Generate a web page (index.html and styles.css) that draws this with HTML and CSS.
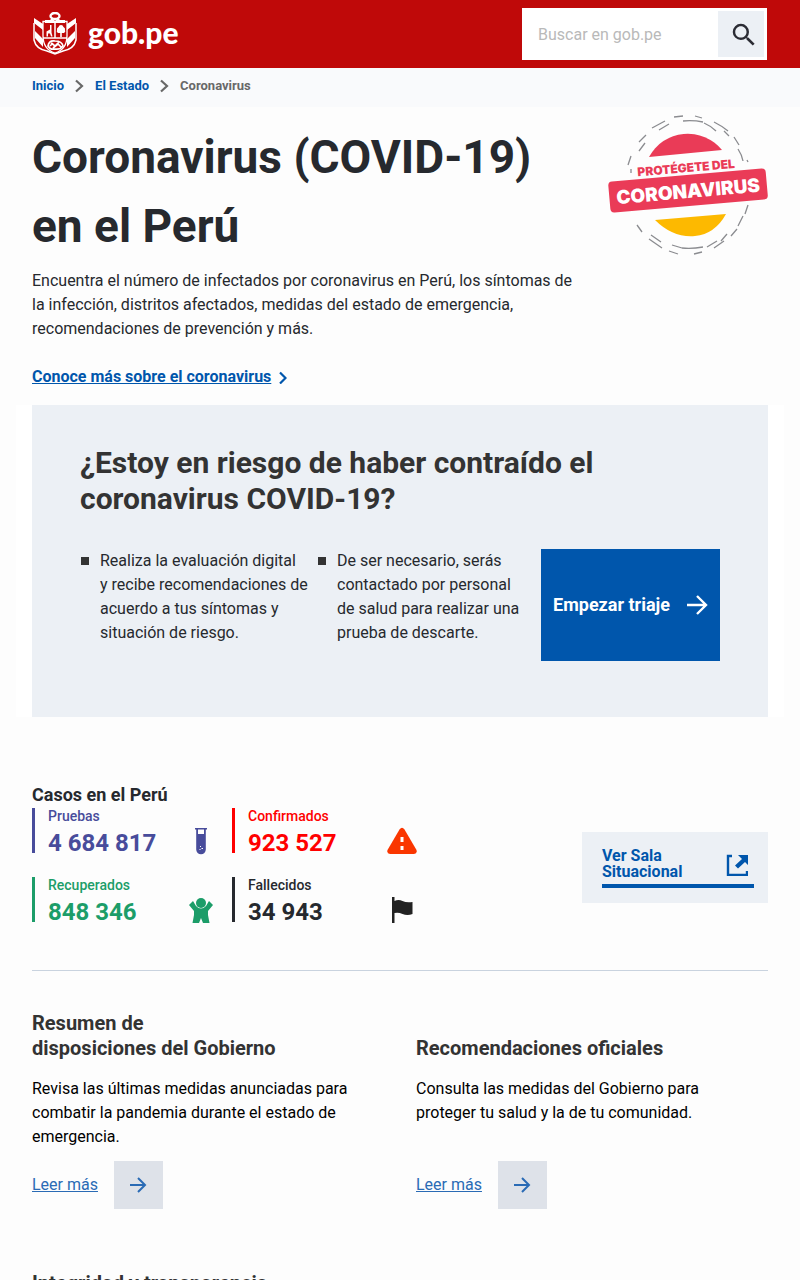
FILE: index.html
```html
<!DOCTYPE html>
<html lang="es">
<head>
<meta charset="utf-8">
<meta name="viewport" content="width=device-width, initial-scale=1">
<title>Coronavirus (COVID-19) en el Perú</title>
<link rel="stylesheet" href="styles.css">
</head>
<body>
<header class="topbar">
  <a class="brand" href="#" aria-label="gob.pe">
    <svg class="crest" viewBox="0 0 44 44" aria-hidden="true">
      <g fill="none" stroke="#fff">
        <ellipse cx="22" cy="4" rx="4.500" ry="3" stroke-width="2.400"/>
        <path d="M10 9.500h24v14q0 14-12 17.500-12-3.500-12-17.500z" stroke-width="1.300"/>
        <path d="M10 26h24M22 10v16" stroke-width="1.500"/>
        <path d="M1 11v17q2 9 13 11l8 3 8-3q11-2 13-11V11" stroke-width="1.500"/>
        <path d="M15 34q1-6 7-5 7 0 8 5-3 4-8 3-5 1-7-3zM18 31l4 3 4-4M20 36l5-4 3 3M17 34l3-3" stroke-width="1.700"/>
      </g>
      <g fill="#fff">
        <path d="M1 6l9 6v6l-9-7zM43 6l-9 6v6l9-7zM2 19l8 8v8L2 26zM42 19l-8 8v8l8-9z"/>
        <path d="M12 8h5l2-2 3 3 3-3 2 2h5v3H12z"/>
        <path d="M17 13h1.500v7.500l1 4H18l-1-3h-2v3h-1.500v-5l3.500-2zM28 13q2 0 2.500 2 2 1 1.500 3 1 2-1 3h-2.200v4h-1.600v-4H25q-2-1-1-3-.5-2 1.500-3 .5-2 2.500-2z"/>
      </g>
    </svg>
    <span class="brand-name">gob.pe</span>
  </a>
  <form class="search" role="search">
    <input class="search-input" type="search" placeholder="Buscar en gob.pe" aria-label="Buscar en gob.pe">
    <button class="search-button" type="button" aria-label="Buscar">
      <svg width="30" height="30" viewBox="0 0 24 24" aria-hidden="true"><path fill="#2b2c34" d="M15.500 14h-.79l-.28-.27A6.470 6.470 0 0 0 16 9.500 6.500 6.500 0 1 0 9.500 16c1.610 0 3.090-.59 4.230-1.570l.27.28v.79l5 4.990L20.490 19l-4.990-5zm-6 0C7.010 14 5 11.990 5 9.500S7.010 5 9.500 5 14 7.010 14 9.500 11.990 14 9.500 14z"/></svg>
    </button>
  </form>
</header>
<nav class="breadcrumb" aria-label="Ruta">
  <a href="#">Inicio</a>
  <svg width="9" height="14" viewBox="0 0 9 14" aria-hidden="true"><path d="M1 1.500L7 7l-6 5.500" fill="none" stroke="#686868" stroke-width="2.200"/></svg>
  <a href="#">El Estado</a>
  <svg width="9" height="14" viewBox="0 0 9 14" aria-hidden="true"><path d="M1 1.500L7 7l-6 5.500" fill="none" stroke="#686868" stroke-width="2.200"/></svg>
  <span>Coronavirus</span>
</nav>
<main>
  <section class="hero">
    <div class="hero-copy">
      <h1>Coronavirus (COVID-19) en el Perú</h1>
      <p>Encuentra el número de infectados por coronavirus en Perú, los síntomas de la infección, distritos afectados, medidas del estado de emergencia, recomendaciones de prevención y más.</p>
      <a class="more" href="#"><span>Conoce más sobre el coronavirus</span>
        <svg width="8" height="14" viewBox="0 0 8 14" aria-hidden="true"><path d="M1 2.500l5.500 5.500L1 13.500" fill="none" stroke="#0056ac" stroke-width="2.200"/></svg>
      </a>
    </div>
    <svg class="seal" viewBox="0 0 160 140" role="img" aria-label="Protégete del coronavirus">
      <path fill="none" stroke="#8b8c90" stroke-width="1.300" d="M44 13l13-7M51 15l10-6M66 2l9-1M75 6q10-1 20 1M87 1l7 2M96 8q7 3 12 8M106 7q8 4 14 9M116 16l5 5M126 22l5 8M130 34q4 6 5 12M139 45l1 2M31 27l7-7M31 36l6-8M20 50l3-9M23 58v-4M140 90l-3 9M135 101l-5 10M129 114l-6 7M119 119l-6 7M116 126l-10 7M109 126l-10 6M86 139l8-2M74 133q10 1 21-1M61 136l9 3M64 130l10 3M41 124l13 9M43 120l10 7M29 110l5 7"/>
      <path d="M41 42a44 44 0 0 1 73-7z" fill="#ea3b57"/>
      <path d="M47 105l71-6q-11 20-31 22-22 2-40-16z" fill="#fdb900"/>
      <g transform="rotate(-5 80 75)">
        <rect x="1" y="60" width="158" height="31" rx="4" fill="#ea3b57"/>
        <text class="seal-small" x="80" y="57" text-anchor="middle">PROTÉGETE DEL</text>
        <text class="seal-large" x="80" y="83" text-anchor="middle">CORONAVIRUS</text>
      </g>
    </svg>
  </section>

  <div class="triage-wrap">
    <section class="triage">
      <h2>¿Estoy en riesgo de haber contraído el coronavirus COVID-19?</h2>
      <div class="triage-row">
        <ul>
          <li><span>Realiza la evaluación digital<br>y recibe recomendaciones de acuerdo a tus síntomas y situación de riesgo.</span></li>
          <li><span>De ser necesario, serás contactado por personal de salud para realizar una prueba de descarte.</span></li>
        </ul>
        <a class="start" href="#">Empezar triaje
          <svg width="22" height="22" viewBox="0 0 22 22" aria-hidden="true"><path d="M1 11h19M11 2l9 9-9 9" fill="none" stroke="#fff" stroke-width="2.400"/></svg>
        </a>
      </div>
    </section>
  </div>

  <section class="cases">
    <div class="cases-main">
      <h3>Casos en el Perú</h3>
      <div class="stats">
        <div class="stat tests"><div><p>Pruebas</p><strong>4 684 817</strong></div>
          <svg width="30" height="30" viewBox="0 0 30 30" aria-hidden="true"><path fill="currentColor" fill-rule="evenodd" d="M9 2h12v1.500h-1.200V23.500a4.800 4.800 0 0 1-9.600 0V3.500H9zM12 3.500V8h6V3.500z"/><path fill="#fff" d="M14 20h1v1h-1zM15.500 22h1.500v1h-1.500zM13.500 23h1v1h-1z"/></svg>
        </div>
        <div class="stat confirmed"><div><p>Confirmados</p><strong>923 527</strong></div>
          <svg width="30" height="30" viewBox="0 0 30 30" aria-hidden="true"><path fill="#fa3600" d="M12.500 3.500q2.500-3.500 5 0L29.500 24q1 3.500-2.500 4H3q-3.500-.5-2.500-4z"/><path fill="#fff" d="M13.500 11h3v5h-3zM13.500 20h3v4h-3z"/></svg>
        </div>
        <div class="stat recovered"><div><p>Recuperados</p><strong>848 346</strong></div>
          <svg width="30" height="30" viewBox="0 0 30 30" aria-hidden="true"><circle cx="15" cy="8" r="5" fill="currentColor"/><path fill="currentColor" d="M3 10l4-4 3 5q5 5 10 0l3-5 4 4-5 6v4l1.500 8h-6.500l-2-5-2 5H6.500L8 20v-4z"/></svg>
        </div>
        <div class="stat deaths"><div><p>Fallecidos</p><strong>34 943</strong></div>
          <svg width="30" height="30" viewBox="0 0 30 30" aria-hidden="true"><path fill="#222" d="M5 2h2.500v4q4-2 8 0t10 1v12q-5 2-10 0-4-2-8-1v10H5z"/></svg>
        </div>
      </div>
    </div>
    <a class="room" href="#">
      <span class="room-inner"><span>Ver Sala Situacional</span>
        <svg width="22" height="22" viewBox="0 0 22 22" aria-hidden="true"><path d="M6 2H2v19h19v-4" fill="none" stroke="#0056ac" stroke-width="2.400"/><path fill="#0056ac" d="M12 1h10v10l-3-3-7 6.500-3-3L16 5z"/></svg>
      </span>
    </a>
  </section>

  <section class="topics">
    <article>
      <h3>Resumen de<br>disposiciones del Gobierno</h3>
      <p>Revisa las últimas medidas anunciadas para combatir la pandemia durante el estado de emergencia.</p>
      <a class="read" href="#"><span>Leer más</span><span class="read-icon"><svg width="18" height="18" viewBox="0 0 18 18" aria-hidden="true"><path d="M1 9h15M9 2l7 7-7 7" fill="none" stroke="#2a6bb5" stroke-width="2"/></svg></span></a>
    </article>
    <article>
      <h3>Recomendaciones oficiales</h3>
      <p>Consulta las medidas del Gobierno para proteger tu salud y la de tu comunidad.</p>
      <a class="read" href="#"><span>Leer más</span><span class="read-icon"><svg width="18" height="18" viewBox="0 0 18 18" aria-hidden="true"><path d="M1 9h15M9 2l7 7-7 7" fill="none" stroke="#2a6bb5" stroke-width="2"/></svg></span></a>
    </article>
    <article class="topic-short">
      <h3>Integridad y transparencia</h3>
    </article>
  </section>
</main>
</body>
</html>
```
FILE: styles.css
```css
* { box-sizing: border-box; }
body { margin: 0; background: #fdfdfd; color: #26292e; font: 16px/24px Roboto, "Liberation Sans", sans-serif; }
h1, h2, h3, p, ul { margin: 0; padding: 0; }
svg { display: block; flex: none; }
a { color: #0056ac; }

.topbar { display: flex; align-items: center; justify-content: space-between; background: #bf0909; padding: 8px 33px 8px 32px; }
.brand { display: flex; align-items: center; gap: 10px; color: #fff; text-decoration: none; }
.crest { width: 46px; height: 44px; }
.brand-name { font: 900 30px/36px Lato, sans-serif; padding-bottom: 4px; }
.search { display: flex; width: 245px; padding: 3px; background: #fff; }
.search-input { flex: 1; min-width: 0; padding: 2px 13px 0; border: 0; background: #fff; font: inherit; color: #26292e; }
.search-input::placeholder { color: #b9b9b9; opacity: 1; }
.search-button { display: grid; place-items: center; width: 46px; height: 46px; padding: 2px 0 0 6px; border: 0; background: #ecf0f5; }

.breadcrumb { display: flex; align-items: center; gap: 11px; padding: 6px 32px 9px; background: #f9fafc; color: #686868; font-size: 13px; font-weight: 700; }
.breadcrumb a { text-decoration: none; }

.hero { display: flex; justify-content: space-between; padding: 8px 32px 16px; }
.hero-copy { width: 544px; padding-top: 8px; }
h1 { font-size: 46px; line-height: 69px; font-weight: 700; }
.hero-copy p { margin: 8px 0 24px; }
.more { display: flex; align-items: center; gap: 8px; font-weight: 700; text-decoration: none; }
.more span { text-decoration: underline; }
.seal { width: 160px; height: 140px; }
.seal text { font-family: Inter, sans-serif; font-weight: 900; }
.seal-small { font-size: 12px; fill: #ea3b57; }
.seal-large { font-size: 19px; fill: #fff; }

.triage-wrap { margin: 0 16px; padding: 0 16px; background: #fff; }
.triage { padding: 40px 48px 56px; background: #ecf0f5; }
.triage h2 { font-size: 30px; line-height: 36px; font-weight: 700; color: #333; }
.triage-row { display: flex; justify-content: space-between; gap: 16px; margin-top: 32px; }
.triage ul { display: grid; grid-template-columns: 233fr 208fr; gap: 4px; flex: 1; list-style: none; }
.triage li { display: flex; gap: 11px; padding-left: 1px; }
.triage li::before { content: ""; flex: none; width: 8px; height: 8px; margin-top: 8px; background: #333; }
.start { display: flex; align-items: center; justify-content: center; gap: 16px; width: 179px; height: 112px; background: #0056ac; color: #fff; font-size: 18px; font-weight: 700; text-decoration: none; }

.cases { display: flex; align-items: center; justify-content: space-between; margin: 0 32px; padding: 65px 0 48px; border-bottom: 1px solid #c9d3df; }
.cases h3 { font-size: 18px; line-height: 26px; font-weight: 700; }
.stats { display: grid; grid-template-columns: 184px 185px; gap: 24px 16px; }
.stat { display: flex; align-items: flex-end; justify-content: space-between; height: 45px; padding-left: 13px; border-left: 3px solid; }
.stat p { margin-bottom: 8px; font-size: 14px; line-height: 17px; font-weight: 500; }
.stat strong { display: block; font-size: 24px; line-height: 20px; font-weight: 700; }
.stat svg { margin-bottom: -3px; }
.tests { color: #484c9b; }
.confirmed { color: #f00; }
.recovered { color: #1c9d69; }
.deaths { color: #26292e; }
.room { width: 186px; margin-top: 30px; padding: 16px 14px 15px 20px; background: #ecf0f5; font-weight: 700; line-height: 16px; text-decoration: none; }
.room-inner { display: flex; align-items: flex-end; justify-content: space-between; gap: 32px; padding: 0 6px 4px 0; border-bottom: 4px solid #0056ac; }
.room-inner svg { margin-bottom: 4px; }

.topics { display: grid; grid-template-columns: 1fr 1fr; gap: 62px 32px; padding: 40px 32px; }
.topics article { display: flex; flex-direction: column; }
.topics h3 { display: flex; align-items: flex-end; min-height: 50px; font-size: 20px; line-height: 25px; font-weight: 700; color: #333; }
.topics .topic-short h3 { min-height: 25px; }
.topics p { min-height: 72px; margin: 16px 0 12px; padding-right: 16px; color: #000; }
.read { display: flex; align-items: center; gap: 16px; color: #2a6bb5; text-decoration: none; }
.read > span:first-child { text-decoration: underline; }
.read-icon { display: grid; place-items: center; width: 49px; height: 48px; background: #dee2e9; }
```
